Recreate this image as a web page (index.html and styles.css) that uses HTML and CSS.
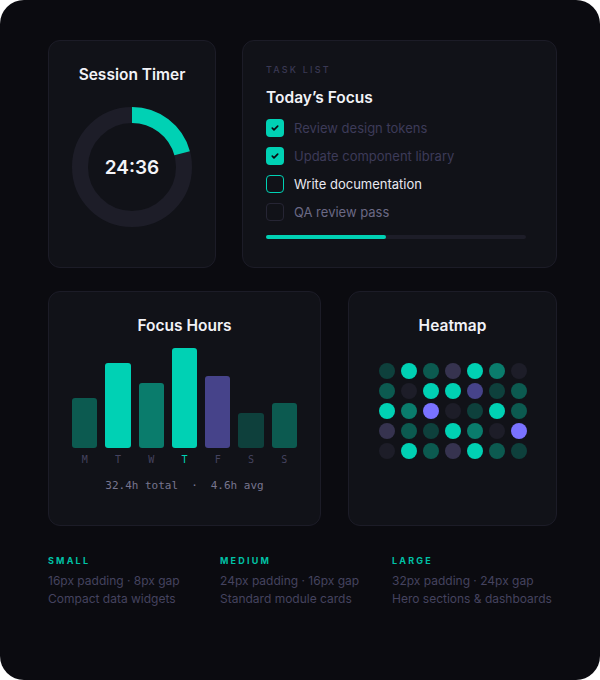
FILE: index.html
```html
<!DOCTYPE html>
<html lang="en">
<head>
<meta charset="utf-8">
<title>Dashboard spacing</title>
<link rel="stylesheet" href="styles.css">
</head>
<body>
<div class="frame">
  <div class="row row-top">
    <section class="card timer">
      <h2 class="card-title">Session Timer</h2>
      <div class="ring">
        <svg width="120" height="120" viewBox="0 0 120 120">
          <circle cx="60" cy="60" r="52" fill="none" stroke="#1d1d28" stroke-width="16"/>
          <circle cx="60" cy="60" r="52" fill="none" stroke="#00d1b4" stroke-width="16" stroke-dasharray="67.6 400" transform="rotate(-90 60 60)"/>
        </svg>
        <span class="ring-time">24:36</span>
      </div>
    </section>

    <section class="card tasks">
      <div class="eyebrow">TASK LIST</div>
      <h2 class="tasks-title">Today’s Focus</h2>
      <ul class="task-list">
        <li class="task done">
          <span class="box box-checked"><svg width="18" height="18" viewBox="0 0 18 18"><path d="M6.3 9.2 L8 10.8 L11.7 7.2" fill="none" stroke="#0b0b10" stroke-width="1.7" stroke-linecap="round" stroke-linejoin="round"/></svg></span>
          <span>Review design tokens</span>
        </li>
        <li class="task done">
          <span class="box box-checked"><svg width="18" height="18" viewBox="0 0 18 18"><path d="M6.3 9.2 L8 10.8 L11.7 7.2" fill="none" stroke="#0b0b10" stroke-width="1.7" stroke-linecap="round" stroke-linejoin="round"/></svg></span>
          <span>Update component library</span>
        </li>
        <li class="task active">
          <span class="box box-active"></span>
          <span>Write documentation</span>
        </li>
        <li class="task todo">
          <span class="box box-empty"></span>
          <span>QA review pass</span>
        </li>
      </ul>
      <div class="progress"><div class="progress-fill"></div></div>
    </section>
  </div>

  <div class="row row-mid">
    <section class="card hours">
      <h2 class="card-title">Focus Hours</h2>
      <div class="bars">
        <div class="bar-col"><div class="bar c-teal2" style="height:50%"></div></div>
        <div class="bar-col"><div class="bar c-bright" style="height:85%"></div></div>
        <div class="bar-col"><div class="bar c-teal3" style="height:65%"></div></div>
        <div class="bar-col"><div class="bar c-bright" style="height:100%"></div></div>
        <div class="bar-col"><div class="bar c-purple" style="height:72%"></div></div>
        <div class="bar-col"><div class="bar c-teal1" style="height:35%"></div></div>
        <div class="bar-col"><div class="bar c-teal2" style="height:45%"></div></div>
      </div>
      <div class="days">
        <span>M</span><span>T</span><span>W</span><span class="today">T</span><span>F</span><span>S</span><span>S</span>
      </div>
      <div class="stats"><span>32.4h total</span><span class="sep">·</span><span>4.6h avg</span></div>
    </section>

    <section class="card heat">
      <h2 class="card-title">Heatmap</h2>
      <div class="dots">
        <span class="dot c-teal1"></span><span class="dot c-bright"></span><span class="dot c-teal2"></span><span class="dot c-pdim"></span><span class="dot c-bright"></span><span class="dot c-teal3"></span><span class="dot c-empty"></span>
        <span class="dot c-teal2"></span><span class="dot c-empty"></span><span class="dot c-bright"></span><span class="dot c-bright"></span><span class="dot c-purple"></span><span class="dot c-teal1"></span><span class="dot c-teal2"></span>
        <span class="dot c-bright"></span><span class="dot c-teal3"></span><span class="dot c-violet"></span><span class="dot c-empty"></span><span class="dot c-teal1"></span><span class="dot c-bright"></span><span class="dot c-teal2"></span>
        <span class="dot c-pdim"></span><span class="dot c-teal2"></span><span class="dot c-teal1"></span><span class="dot c-bright"></span><span class="dot c-teal3"></span><span class="dot c-empty"></span><span class="dot c-violet"></span>
        <span class="dot c-empty"></span><span class="dot c-bright"></span><span class="dot c-teal2"></span><span class="dot c-pdim"></span><span class="dot c-bright"></span><span class="dot c-teal2"></span><span class="dot c-teal1"></span>
      </div>
    </section>
  </div>

  <div class="legend">
    <div class="legend-item">
      <div class="legend-label">SMALL</div>
      <div class="legend-text">16px padding · 8px gap</div>
      <div class="legend-text">Compact data widgets</div>
    </div>
    <div class="legend-item">
      <div class="legend-label">MEDIUM</div>
      <div class="legend-text">24px padding · 16px gap</div>
      <div class="legend-text">Standard module cards</div>
    </div>
    <div class="legend-item">
      <div class="legend-label">LARGE</div>
      <div class="legend-text">32px padding · 24px gap</div>
      <div class="legend-text">Hero sections &amp; dashboards</div>
    </div>
  </div>
</div>
</body>
</html>
```

FILE: styles.css
```css
* { box-sizing: border-box; }

html, body {
  margin: 0;
  padding: 0;
  background: #ffffff;
}

body {
  font-family: "Inter", "Liberation Sans", sans-serif;
  color: #f0f0f5;
}

.frame {
  width: 600px;
  height: 680px;
  background: #0b0b10;
  border-radius: 24px;
  padding: 40px 0 0 48px;
  display: flex;
  flex-direction: column;
}

.row {
  display: grid;
}

.row-top {
  grid-template-columns: 168px 315px;
  column-gap: 26px;
  height: 228px;
}

.row-mid {
  grid-template-columns: 273px 209px;
  column-gap: 27px;
  height: 235px;
  margin-top: 23px;
}

.card {
  background: #111218;
  border: 1px solid #1c1c27;
  border-radius: 12px;
}

.card-title {
  margin: 0;
  font-size: 15.5px;
  line-height: 20px;
  font-weight: 600;
  text-align: center;
  color: #f2f2f7;
}

/* Timer */
.timer {
  padding: 24px 0 0;
  display: flex;
  flex-direction: column;
  align-items: center;
}

.ring {
  position: relative;
  width: 120px;
  height: 120px;
  margin-top: 22px;
}

.ring svg { display: block; }

.ring-time {
  position: absolute;
  inset: 0;
  display: flex;
  align-items: center;
  justify-content: center;
  font-size: 19px;
  font-weight: 600;
  color: #f4f4f8;
}

/* Tasks */
.tasks {
  padding: 23px 23px 0;
}

.eyebrow {
  font-size: 9px;
  line-height: 12px;
  letter-spacing: 2.2px;
  font-weight: 500;
  color: #3a3954;
}

.tasks-title {
  margin: 12px 0 0;
  font-size: 15.5px;
  line-height: 20px;
  font-weight: 600;
  color: #f2f2f7;
}

.task-list {
  list-style: none;
  margin: 11px 0 0;
  padding: 0;
  display: flex;
  flex-direction: column;
  gap: 10px;
}

.task {
  display: flex;
  align-items: center;
  gap: 10px;
  height: 18px;
  font-size: 13px;
}

.done { color: #3d3b59; }
.active { color: #e8e8f0; }
.todo { color: #6b6985; }

.box {
  width: 18px;
  height: 18px;
  border-radius: 4px;
  flex: none;
}

.box svg { display: block; }

.box-checked { background: #00d1b4; }
.box-active { border: 1.5px solid #00d1b4; }
.box-empty { border: 1.5px solid #262534; }

.progress {
  margin-top: 14px;
  width: 260px;
  height: 4px;
  border-radius: 2px;
  background: #1d1d28;
}

.progress-fill {
  width: 46%;
  height: 100%;
  border-radius: 2px;
  background: #00d1b4;
}

/* Focus hours */
.hours {
  padding: 24px 23px 0;
}

.bars {
  margin-top: 12px;
  height: 100px;
  display: flex;
  gap: 8px;
  align-items: flex-end;
}

.bar-col {
  flex: 1;
  height: 100%;
  display: flex;
  align-items: flex-end;
}

.bar {
  width: 100%;
  border-radius: 3px;
}

.c-bright { background: #00d1b4; }
.c-teal3 { background: #0a7c6c; }
.c-teal2 { background: #0c5a50; }
.c-teal1 { background: #0e403c; }
.c-purple { background: #46438a; }
.c-violet { background: #7a72ff; }
.c-pdim { background: #36334f; }
.c-empty { background: #1d1d28; }

.days {
  margin-top: 6px;
  display: flex;
  gap: 8px;
  font-family: "DejaVu Sans Mono", "Liberation Mono", monospace;
  font-size: 10px;
  line-height: 12px;
  color: #45435f;
}

.days span {
  flex: 1;
  text-align: center;
}

.days .today { color: #00d1b4; }

.stats {
  margin-top: 13px;
  text-align: center;
  font-family: "DejaVu Sans Mono", "Liberation Mono", monospace;
  font-size: 11px;
  line-height: 14px;
  color: #77758f;
}

.sep { margin: 0 13px; }

/* Heatmap */
.heat {
  padding: 24px 0 0;
  display: flex;
  flex-direction: column;
  align-items: center;
}

.dots {
  margin-top: 27px;
  display: grid;
  grid-template-columns: repeat(7, 16px);
  column-gap: 6px;
  row-gap: 4px;
}

.dot {
  width: 16px;
  height: 16px;
  border-radius: 50%;
}

/* Legend */
.legend {
  margin-top: 29px;
  display: grid;
  grid-template-columns: repeat(3, 172px);
}

.legend-label {
  font-size: 9px;
  line-height: 12px;
  font-weight: 700;
  letter-spacing: 2.2px;
  color: #00c2a6;
  margin-bottom: 5px;
}

.legend-text {
  font-size: 12px;
  line-height: 18px;
  color: #45435f;
}
```
